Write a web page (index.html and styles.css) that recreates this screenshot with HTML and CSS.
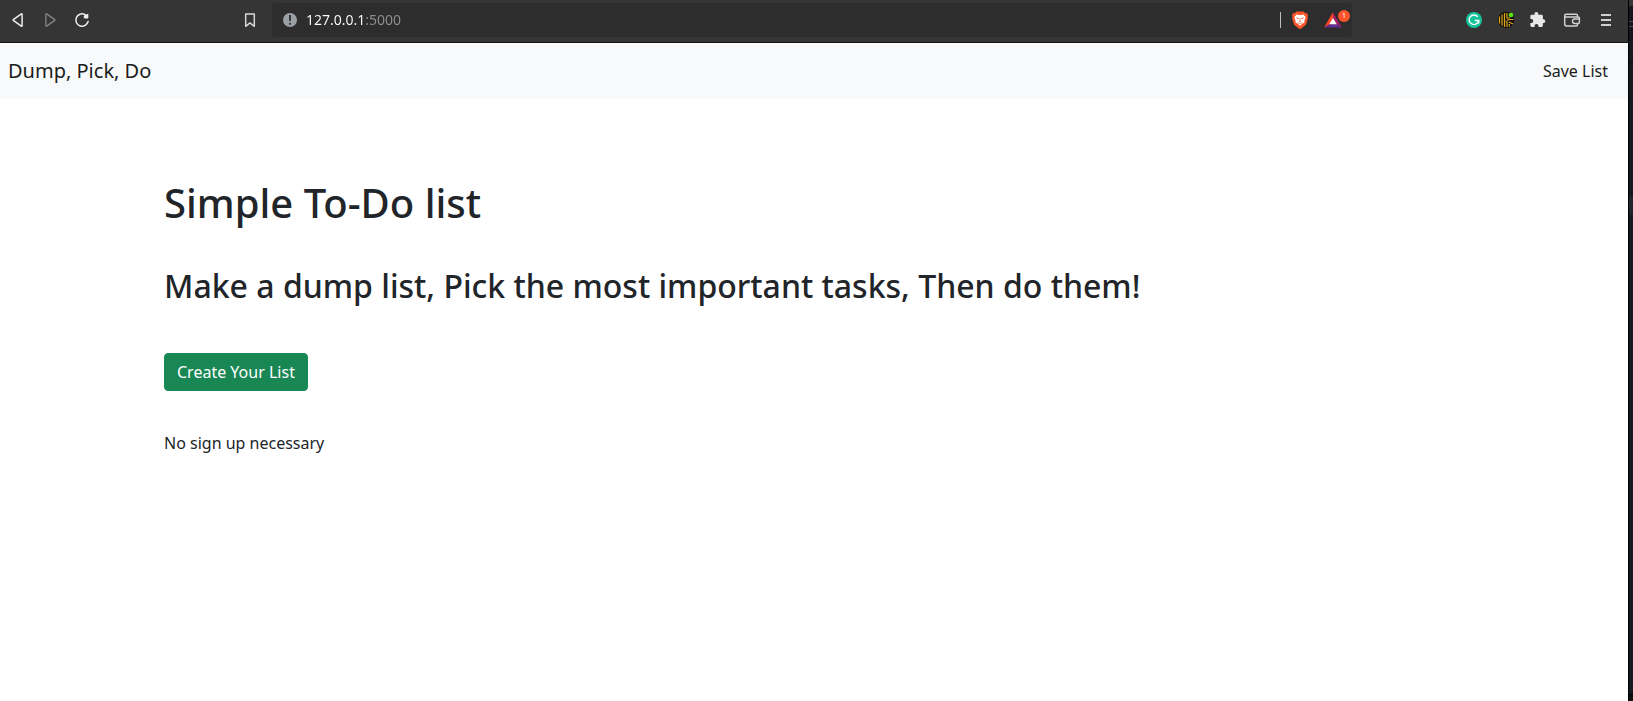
FILE: index.html
```html
<!DOCTYPE html>
<html lang="en">
<head>
<meta charset="utf-8">
<title>Dump, Pick, Do</title>
<link rel="stylesheet" href="styles.css">
</head>
<body>
<div class="window">
  <header class="toolbar">
    <div class="toolbar-start">
      <div class="history">
        <button class="tool" type="button" aria-label="Back">
          <svg viewBox="0 0 18 18"><path d="M13.100 3.300v11.400a.5.5 0 0 1-.8.4L4.300 9.400a.5.5 0 0 1 0-.8l8-5.700a.5.5 0 0 1 .8.4z" fill="none" stroke="#eeeeee" stroke-width="1.500"/></svg>
        </button>
        <button class="tool" type="button" aria-label="Forward" disabled>
          <svg viewBox="0 0 18 18"><path d="M4.900 3.300v11.400a.5.5 0 0 0 .8.4l8-5.700a.5.5 0 0 0 0-.8l-8-5.700a.5.5 0 0 0-.8.4z" fill="none" stroke="#848484" stroke-width="1.300"/></svg>
        </button>
        <button class="tool" type="button" aria-label="Reload">
          <svg viewBox="0 0 18 18"><path d="M11.800 3.500A6.200 6.200 0 1 0 15.100 10.500" fill="none" stroke="#eeeeee" stroke-width="1.500" stroke-linecap="round"/><path d="M15.300 2.700v4.100a.6.6 0 0 1-.6.600h-2.400c-1.300 0-1.900-.8-1.600-1.900.3-1.300 1.700-2.500 3.300-2.200z" fill="#eeeeee"/></svg>
        </button>
      </div>
      <button class="tool" type="button" aria-label="Bookmark this page">
        <svg viewBox="0 0 18 18"><path d="M4.700 3h8.600v12.300L9 11.900l-4.300 3.400z" fill="none" stroke="#d6d6d6" stroke-width="1.500" stroke-linejoin="round"/></svg>
      </button>
    </div>
    <div class="address">
      <svg class="icon" viewBox="0 0 18 18"><circle cx="9" cy="9" r="7" fill="#9aa0a6"/><path d="M9 4v6M9 11.700v2" stroke="#2e2e2e" stroke-width="1.800"/></svg>
      <input class="address-input" type="text" value="127.0.0.1:5000" aria-label="Address">
      <span class="divider"></span>
      <button class="tool" type="button" aria-label="Shields">
        <svg viewBox="0 0 18 18"><path d="M5.500.500h7l1.500 1.500 1.600-.1 1.400 2.200-.5 1.700.4 1.500-2 6.500L9.700 18a1.200 1.200 0 0 1-1.400 0L3.100 13.800 1.100 7.300l.4-1.500L1 4.100l1.400-2.200 1.600.1z" fill="#fb542b"/><path d="M5.500 3.400l2 .5h3l2-.5 2.200 2.900-1.200 3-.1 2.100-2.600 1.700L9 14.800l-1.800-1.700-2.600-1.700-.1-2.100-1.200-3z" fill="#fff"/><path d="M5 6.300l3 .9-1.300 1zM13 6.300l-3 .9 1.300 1zM7.700 9.700h2.600L9 11z" fill="#e45731"/><path d="M9 7v3M6.500 11.500l2.500 1.200 2.500-1.200" fill="none" stroke="#e98669" stroke-width=".8"/></svg>
      </button>
      <button class="tool rewards" type="button" aria-label="Rewards">
        <svg viewBox="0 0 18 18"><path d="M9 1.200L0 16.500l6-3.400L9 8z" fill="#ff4724"/><path d="M9 1.200v6.200l3.400 5.700 5.600 3.400z" fill="#9e1f63"/><path d="M0 16.500h18l-5.600-3.400H6z" fill="#662d91"/><path d="M9 7l3.800 6.300H5.200z" fill="#fff"/></svg>
        <span class="badge">1</span>
      </button>
    </div>
    <div class="toolbar-end">
      <div class="extensions">
        <button class="tool" type="button" aria-label="Writing assistant">
          <svg viewBox="0 0 18 18"><circle cx="9" cy="9" r="8" fill="#15c39a"/><path d="M12.700 5.800A4.800 4.800 0 1 0 13.700 9.500H9.700M13.700 9.500v3" fill="none" stroke="#fff" stroke-width="1.400"/></svg>
        </button>
        <button class="tool" type="button" aria-label="Key manager">
          <svg viewBox="0 0 18 18"><circle cx="9" cy="9" r="8.200" fill="#111"/><path d="M2.500 5.500v7M5 3.500v11M7.500 2v14M10 2v5h3M10 16v-4.500l-1-1.500M10 9.500l2-1h4.500M12 11l4 2M12.300 13v2.500" fill="none" stroke="#e0a91a" stroke-width="1.200"/><circle cx="14" cy="4" r="2.300" fill="#58e414"/></svg>
        </button>
        <button class="tool" type="button" aria-label="Extensions">
          <svg viewBox="0 0 18 18"><path d="M14.800 8.300h-.9V5.200c0-.8-.6-1.400-1.400-1.400H9.300v-.9a1.900 1.900 0 0 0-3.800 0v.9H2.700c-.8 0-1.300.6-1.300 1.400v2.700h.9a2 2 0 0 1 0 4h-.9v2.700c0 .8.600 1.400 1.300 1.400h2.800v-.9a2 2 0 0 1 4 0v.9h3c.8 0 1.400-.6 1.400-1.400V12h.9a1.900 1.900 0 0 0 0-3.700z" fill="#e8e8e8"/></svg>
        </button>
      </div>
      <button class="tool" type="button" aria-label="Wallet">
        <svg viewBox="0 0 18 18"><path d="M14.500 6V4.500c0-.8-.5-1.200-1.200-1.200H3.200C2.200 3.300 1.700 3.900 1.700 4.800v8.300c0 1.200.7 1.900 1.900 1.900h9.700c.8 0 1.200-.4 1.200-1.200v-1M1.700 4.700c0 .8.600 1.200 1.500 1.200h12c.8 0 1.200.4 1.200 1.200v4.200c0 .8-.4 1.200-1.200 1.200h-3.500a2 2 0 0 1 0-4.400h4.600" fill="none" stroke="#cfcfcf" stroke-width="1.500"/></svg>
      </button>
      <button class="tool" type="button" aria-label="Menu">
        <svg viewBox="0 0 18 18"><path d="M4 4h10M4 9h10M4 14h10" stroke="#cfcfcf" stroke-width="2"/></svg>
      </button>
    </div>
  </header>

  <nav class="navbar">
    <a class="brand" href="#">Dump, Pick, Do</a>
    <a class="nav-link" href="#">Save List</a>
  </nav>

  <main class="content">
    <h1 class="title">Simple To-Do list</h1>
    <h2 class="subtitle">Make a dump list, Pick the most important tasks, Then do them!</h2>
    <button class="create" type="button">Create Your List</button>
    <p class="note">No sign up necessary</p>
  </main>
</div>
<aside class="backdrop">
  <div class="backdrop-tab"></div>
  <div class="backdrop-bar"></div>
  <div class="backdrop-row"></div>
  <div class="backdrop-gap"></div>
  <div class="backdrop-active"></div>
  <div class="backdrop-body"></div>
  <div class="backdrop-status"></div>
</aside>
</body>
</html>
```
FILE: styles.css
```css
* {
  box-sizing: border-box;
}

body {
  margin: 0;
  min-height: 100vh;
  display: flex;
  background: #fff;
  color: #212529;
  font: 16px/24px "Noto Sans", "Open Sans", sans-serif;
}

button,
input {
  font: inherit;
}

.window {
  flex: 1;
  min-width: 0;
}

/* Browser toolbar */
.toolbar {
  display: grid;
  grid-template-columns: 272px 1fr 276px;
  padding: 3px 0 5px;
  background: #353535;
  border-bottom: 1px solid #111;
}

.toolbar-start,
.toolbar-end,
.history,
.extensions,
.address {
  display: flex;
  align-items: center;
}

.toolbar-start {
  justify-content: space-between;
  padding: 0 13px 0 9px;
}

.history,
.extensions {
  gap: 14px;
}

.toolbar-end {
  justify-content: flex-end;
  gap: 16px;
  padding-right: 13px;
}

.tool {
  width: 18px;
  height: 18px;
  padding: 0;
  border: 0;
  background: none;
}

.tool svg,
.icon {
  display: block;
  width: 18px;
  height: 18px;
}

.address {
  height: 34px;
  padding: 0 10px 0 9px;
  background: #2d2d2d;
  border-radius: 4px;
}

.address-input {
  flex: 1;
  min-width: 0;
  margin-left: 7px;
  padding: 0;
  border: 0;
  outline: 0;
  font-size: 14px;
  line-height: 20px;
  color: #fff;
  /* host bright, port dimmed */
  background: linear-gradient(90deg, #fff 59px, #909090 59px);
  -webkit-background-clip: text;
  background-clip: text;
  -webkit-text-fill-color: transparent;
}

.divider {
  width: 1px;
  height: 16px;
  margin-right: 10px;
  background: #bdbdbd;
}

.rewards {
  position: relative;
  margin-left: 15px;
}

.badge {
  position: absolute;
  top: -1px;
  right: -8px;
  width: 12px;
  height: 12px;
  border-radius: 6px;
  background: #fb542b;
  color: #fff;
  font-size: 7px;
  line-height: 12px;
  text-align: center;
}

/* Site header */
.navbar {
  display: flex;
  align-items: center;
  justify-content: space-between;
  padding: 13px 20px 13px 8px;
  background: #f8f9fa;
}

.brand,
.nav-link {
  color: #1a1d20;
  text-decoration: none;
}

.brand {
  font-size: 20px;
  line-height: 30px;
}

/* Landing content */
.content {
  padding: 80px 164px;
}

.title,
.subtitle {
  margin: 0;
  font-weight: 500;
}

.title {
  font-size: 40px;
  line-height: 48px;
}

.subtitle {
  margin: 39px 0 48px;
  font-size: 32px;
  line-height: 39px;
}

.create {
  display: block;
  padding: 6px 12px;
  border: 1px solid #198754;
  border-radius: 4px;
  background: #198754;
  color: #fff;
}

.note {
  margin: 40px 0 0;
}

/* Sliver of the editor behind the browser */
.backdrop {
  display: flex;
  flex-direction: column;
  width: 5px;
  border-left: 1px solid #000;
  background: #161b1f;
}

.backdrop-tab {
  height: 6px;
  background: #353535;
}

.backdrop-bar {
  height: 35px;
  background: linear-gradient(#16151c 15px, #4a4d55 15px 16px, #16151c 16px 20px, #4a4d55 20px 21px, #16151c 21px);
}

.backdrop-row {
  height: 22px;
  border-bottom: 1px solid #08090b;
}

.backdrop-gap {
  height: 133px;
}

.backdrop-active {
  height: 19px;
  background: #20242e;
}

.backdrop-body {
  flex: 1;
}

.backdrop-status {
  height: 7px;
  border-top: 1px solid #000;
  background: #0e0f13;
}
```
